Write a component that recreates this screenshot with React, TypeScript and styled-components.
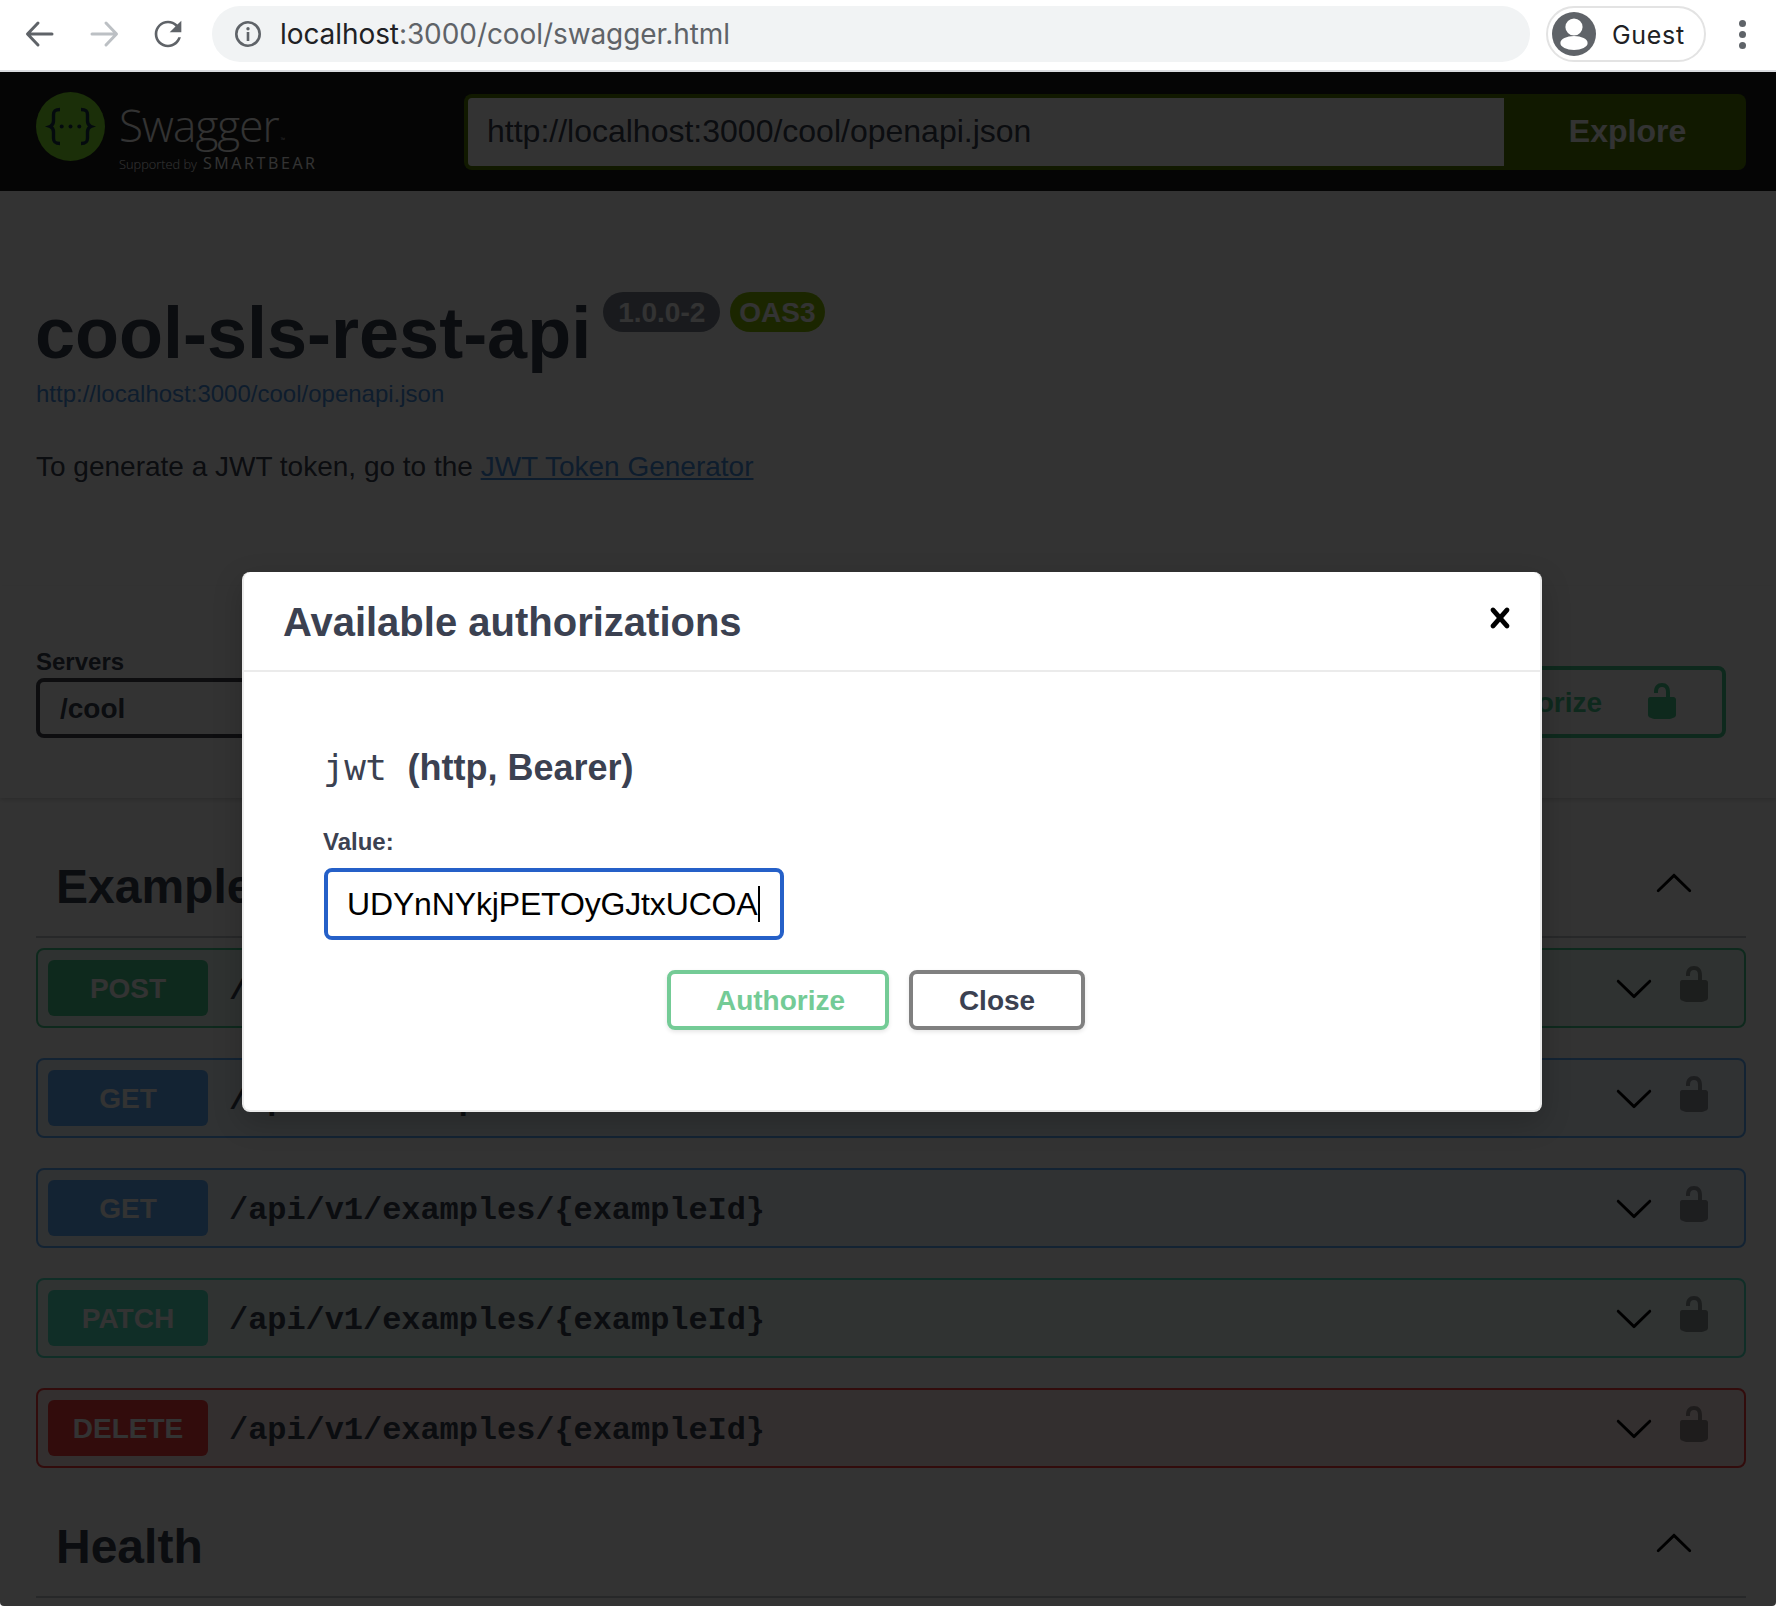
import React from 'react';
import styled, { createGlobalStyle } from 'styled-components';

const GlobalStyle = createGlobalStyle`
  html, body {
    margin: 0;
    padding: 0;
    background: #fff;
  }
  * {
    box-sizing: border-box;
  }
`;

const methodColors = {
  post: '#49cc90',
  get: '#61affe',
  patch: '#50e3c2',
  delete: '#f93e3e',
};

type Method = keyof typeof methodColors;

const sans = `'Liberation Sans', Arial, sans-serif`;
const mono = `'Liberation Mono', 'Courier New', monospace`;

const Window = styled.div`
  width: 1776px;
  height: 1606px;
  display: flex;
  flex-direction: column;
  overflow: hidden;
  border-radius: 0 0 4px 4px;
  font-family: ${sans};
  color: #3b4151;
`;

/* browser chrome */
const BrowserBar = styled.div`
  flex: none;
  height: 72px;
  display: flex;
  align-items: center;
  padding: 0 0 2px 20px;
  background: #fff;
  border-bottom: 2px solid #dadce0;
`;

const NavIcon = styled.svg`
  flex: none;
  width: 40px;
  height: 40px;
  margin-right: 24px;
`;

const Omnibox = styled.div`
  flex: none;
  width: 1318px;
  height: 56px;
  padding-left: 22px;
  display: flex;
  align-items: center;
  gap: 18px;
  border-radius: 28px;
  background: #f1f3f4;
`;

const UrlText = styled.div`
  font-family: Inter, sans-serif;
  font-size: 28px;
  color: #5f6368;
  white-space: nowrap;
  letter-spacing: -0.08px;

  strong {
    font-weight: 400;
    color: #202124;
  }
`;

const GuestChip = styled.div`
  flex: none;
  width: 160px;
  height: 56px;
  margin-left: 16px;
  padding-left: 4px;
  display: flex;
  align-items: center;
  gap: 16px;
  border: 2px solid #e3e3e3;
  border-radius: 28px;
  font-family: Inter, sans-serif;
  font-size: 25px;
  letter-spacing: 0.7px;
  color: #202124;
`;

const GuestName = styled.span`
  padding-top: 2px;
`;

const MenuDots = styled.div`
  flex: none;
  margin-left: 33px;
  display: flex;
  flex-direction: column;
  gap: 4px;

  span {
    width: 7px;
    height: 7px;
    border-radius: 50%;
    background: #5f6368;
  }
`;

/* swagger page */
const Viewport = styled.div`
  flex: 1;
  position: relative;
  overflow: hidden;
  background: #fff;
`;

const TopBar = styled.div`
  height: 119px;
  padding: 0 30px 0 36px;
  display: flex;
  align-items: center;
  background: #1b1b1b;
`;

const LogoBlock = styled.div`
  flex: none;
  width: 428px;
  height: 80px;
  display: flex;
  gap: 14px;
  color: #fff;
  font-family: 'Open Sans', sans-serif;
`;

const LogoText = styled.div`
  padding-top: 6px;
  display: flex;
  flex-direction: column;
  gap: 1px;
`;

const LogoName = styled.div`
  height: 54px;
  font-size: 44px;
  font-weight: 300;
  line-height: 54px;
  letter-spacing: -0.9px;

  sup {
    margin-left: 2px;
    font-size: 6px;
    line-height: 0;
    vertical-align: baseline;
    letter-spacing: 0;
  }
`;

const LogoTag = styled.div`
  display: flex;
  align-items: baseline;
  gap: 6px;
  font-size: 12.8px;
  font-weight: 300;
  line-height: 20px;

  b {
    font-size: 16px;
    font-weight: 400;
    letter-spacing: 2.6px;
  }
`;

const UrlForm = styled.div`
  flex: 1;
  height: 76px;
  display: flex;
`;

const UrlInput = styled.div`
  flex: 1;
  padding-left: 19px;
  display: flex;
  align-items: center;
  background: #fff;
  border: 4px solid #547f00;
  border-right: none;
  border-radius: 8px 0 0 8px;
  font-size: 32px;
  color: #3b4151;
`;

const ExploreButton = styled.div`
  flex: none;
  width: 242px;
  padding-left: 5px;
  display: flex;
  align-items: center;
  justify-content: center;
  background: #547f00;
  border-radius: 0 8px 8px 0;
  font-size: 32px;
  font-weight: 700;
  color: #fff;
`;

const Info = styled.div`
  padding: 102px 36px 101px;
`;

const TitleRow = styled.div`
  display: flex;
  align-items: flex-start;
  gap: 12px;
`;

const Title = styled.h2`
  margin: 0 0 0 -1px;
  font-size: 72px;
  line-height: 80px;
  font-weight: 700;
`;

const Badges = styled.div`
  display: flex;
  gap: 10px;
  margin-top: -1px;
`;

const Badge = styled.span<{ $color: string }>`
  height: 40px;
  padding: 2px 15px 0;
  display: flex;
  align-items: center;
  border-radius: 20px;
  background: ${(p) => p.$color};
  font-size: 28px;
  font-weight: 700;
  color: #fff;
`;

const OasBadge = styled(Badge)`
  padding: 2px 9px 0;
`;

const SpecLink = styled.div`
  margin-top: 5px;
  font-size: 24px;
  line-height: 32px;
  color: #4990e2;
`;

const Description = styled.p`
  margin: 39px 0 0;
  font-size: 28px;
  line-height: 36px;

  a {
    color: #4990e2;
    text-decoration: underline;
  }
`;

const SchemeContainer = styled.div`
  padding: 60px 50px 60px 36px;
  display: flex;
  align-items: flex-end;
  justify-content: space-between;
  background: #fff;
  box-shadow: 0 2px 4px 0 rgba(0, 0, 0, 0.15);
`;

const ServersLabel = styled.div`
  font-size: 24px;
  line-height: 32px;
  font-weight: 700;
`;

const ServerSelect = styled.div`
  width: 320px;
  height: 60px;
  padding: 2px 0 0 20px;
  display: flex;
  align-items: center;
  border: 4px solid #41444e;
  border-radius: 8px;
  font-size: 28px;
  font-weight: 700;
`;

const AuthorizeButton = styled.div`
  height: 72px;
  padding: 2px 40px 0 44px;
  display: flex;
  align-items: center;
  gap: 40px;
  border: 4px solid #49cc90;
  border-radius: 8px;
  font-size: 28px;
  font-weight: 700;
  color: #49cc90;

  svg {
    margin-top: -4px;
  }
`;

const LockIcon = styled.svg<{ $dim?: boolean }>`
  flex: none;
  width: 40px;
  height: 40px;
  fill: ${(p) => (p.$dim ? 'rgba(0, 0, 0, 0.4)' : 'currentColor')};
`;

const TagSection = styled.section`
  margin: 59px 30px 0 36px;
`;

const TagSectionNext = styled(TagSection)`
  margin-top: 49px;
`;

const TagHeader = styled.div`
  height: 81px;
  padding: 0 52px 0 20px;
  display: flex;
  justify-content: space-between;
  border-bottom: 2px solid rgba(59, 65, 81, 0.3);
`;

const TagName = styled.h3`
  margin: 0;
  font-size: 48px;
  line-height: 60px;
  font-weight: 700;
`;

const ArrowIcon = styled.svg<{ $up?: boolean }>`
  flex: none;
  width: 40px;
  height: 40px;
  fill: #000;
  transform: ${(p) => (p.$up ? 'rotate(180deg)' : 'none')};
`;

const TagArrow = styled(ArrowIcon)`
  margin-top: 7px;
`;

const OpList = styled.div`
  margin-top: 10px;
  display: flex;
  flex-direction: column;
  gap: 30px;
`;

const OpBlock = styled.div<{ $method: Method }>`
  height: 80px;
  padding: 0 30px 0 10px;
  display: flex;
  align-items: center;
  gap: 20px;
  border: 2px solid ${(p) => methodColors[p.$method]};
  border-radius: 8px;
  background: ${(p) => methodColors[p.$method]}1a;
`;

const MethodPill = styled.div<{ $method: Method }>`
  flex: none;
  width: 160px;
  height: 56px;
  padding-top: 2px;
  display: flex;
  align-items: center;
  justify-content: center;
  border-radius: 6px;
  background: ${(p) => methodColors[p.$method]};
  font-size: 28px;
  font-weight: 700;
  color: #fff;
`;

const OpPath = styled.div`
  flex: 1;
  margin-left: 1px;
  padding-top: 4px;
  font-family: ${mono};
  font-size: 32px;
  font-weight: 700;
  letter-spacing: -0.06px;
  white-space: nowrap;
`;

const OpLock = styled(LockIcon)`
  margin-bottom: 8px;
`;

/* modal */
const Backdrop = styled.div`
  position: absolute;
  inset: 0;
  padding: 500px 0 0 242px;
  background: rgba(0, 0, 0, 0.8);
`;

const Modal = styled.div`
  width: 1300px;
  height: 540px;
  background: #fff;
  border: 2px solid #ebebeb;
  border-top: none;
  border-radius: 8px;
  box-shadow: 0 10px 30px rgba(0, 0, 0, 0.2);
`;

const ModalHeader = styled.div`
  height: 100px;
  padding: 0 20px 0 39px;
  display: flex;
  align-items: flex-start;
  justify-content: space-between;
  border-bottom: 2px solid #ebebeb;
`;

const ModalTitle = styled.h4`
  margin: 26px 0 0;
  font-size: 40px;
  line-height: 48px;
  font-weight: 700;
`;

const CloseIcon = styled.svg`
  flex: none;
  width: 40px;
  height: 40px;
  margin-top: 26px;
  fill: #000;
`;

const ModalBody = styled.div`
  padding: 72px 0 0 79px;
`;

const SchemeTitle = styled.h4`
  margin: 0;
  display: flex;
  align-items: baseline;
  gap: 21px;
  font-size: 36px;
  line-height: 48px;
  font-weight: 700;
`;

const SchemeName = styled.code`
  font-family: 'DejaVu Sans Mono', monospace;
  font-size: 36px;
  font-weight: 400;
  letter-spacing: -0.5px;
`;

const FieldLabel = styled.div`
  margin-top: 34px;
  font-size: 24px;
  line-height: 32px;
  font-weight: 700;
`;

const TokenField = styled.div`
  width: 460px;
  height: 72px;
  margin: 10px 0 0 1px;
  padding-left: 19px;
  display: flex;
  align-items: center;
  border: 4px solid #2560c8;
  border-radius: 8px;
  font-size: 32px;
  letter-spacing: -0.15px;
  color: #000;
  white-space: nowrap;
`;

const Caret = styled.span`
  flex: none;
  width: 2px;
  height: 36px;
  background: #000;
`;

const ModalActions = styled.div`
  margin-top: 30px;
  padding-right: 111px;
  display: flex;
  justify-content: center;
  gap: 20px;
`;

const ModalButton = styled.div<{ $accent: string; $text: string; $width: number }>`
  width: ${(p) => p.$width}px;
  height: 60px;
  padding-top: 2px;
  display: flex;
  align-items: center;
  justify-content: center;
  border: 4px solid ${(p) => p.$accent};
  border-radius: 8px;
  box-shadow: 0 2px 4px rgba(0, 0, 0, 0.1);
  font-size: 28px;
  font-weight: 700;
  color: ${(p) => p.$text};
`;

const ModalAuthorize = styled(ModalButton)`
  padding-left: 5px;
`;

const Unlocked = ({ dim }: { dim?: boolean }) => {
  const Comp = dim ? OpLock : LockIcon;
  return (
    <Comp viewBox="0 0 20 20" $dim={dim}>
      <path d="M15.8 8H14V5.6C14 2.703 12.665 1 10 1 7.334 1 6 2.703 6 5.6V6h2v-.801C8 3.754 8.797 3 10 3c1.203 0 2 .754 2 2.199V8H4c-.553 0-1 .646-1 1.199V17c0 .549.428 1.139.951 1.307l1.197.387C5.672 18.861 6.55 19 7.1 19h5.8c.549 0 1.428-.139 1.951-.307l1.196-.387c.524-.167.953-.757.953-1.306V9.199C17 8.646 16.352 8 15.8 8z" />
    </Comp>
  );
};

const arrowPath =
  'M17.418 6.109c.272-.268.709-.268.979 0s.271.701 0 .969l-7.908 7.83c-.27.268-.707.268-.979 0l-7.908-7.83c-.27-.268-.27-.701 0-.969.271-.268.709-.268.979 0L10 13.25l7.418-7.141z';

const operations: { method: Method; label: string; path: string }[] = [
  { method: 'post', label: 'POST', path: '/api/v1/examples' },
  { method: 'get', label: 'GET', path: '/api/v1/examples' },
  { method: 'get', label: 'GET', path: '/api/v1/examples/{exampleId}' },
  { method: 'patch', label: 'PATCH', path: '/api/v1/examples/{exampleId}' },
  { method: 'delete', label: 'DELETE', path: '/api/v1/examples/{exampleId}' },
];

export default function App() {
  return (
    <Window>
      <GlobalStyle />
      <BrowserBar>
        <NavIcon viewBox="0 0 40 40" fill="none" stroke="#5f6368" strokeWidth="3" strokeLinecap="round" strokeLinejoin="round">
          <path d="M32 20H8M18 9 7.500 20 18 31" />
        </NavIcon>
        <NavIcon viewBox="0 0 40 40" fill="none" stroke="#bcc0c4" strokeWidth="3" strokeLinecap="round" strokeLinejoin="round">
          <path d="M8 20h24M22 9l10.500 11L22 31" />
        </NavIcon>
        <NavIcon viewBox="0 0 24 24" fill="#5f6368">
          <path d="M17.65 6.35C16.2 4.9 14.21 4 12 4c-4.42 0-7.99 3.58-7.99 8s3.57 8 7.99 8c3.73 0 6.84-2.55 7.73-6h-1.6c-.82 2.33-3.04 4.4-6.13 4.4-3.54 0-6.4-2.86-6.4-6.4s2.86-6.4 6.4-6.4c1.77 0 3.3.7 4.5 1.9L13 11h7V4l-2.35 2.35z" />
        </NavIcon>
        <Omnibox>
          <svg width="28" height="28" viewBox="0 0 28 28" fill="none">
            <circle cx="14" cy="14" r="11.700" stroke="#5f6368" strokeWidth="2.600" />
            <circle cx="14" cy="8.800" r="1.700" fill="#5f6368" />
            <rect x="12.700" y="12" width="2.600" height="9" fill="#5f6368" />
          </svg>
          <UrlText>
            <strong>localhost</strong>:3000/cool/swagger.html
          </UrlText>
        </Omnibox>
        <GuestChip>
          <svg width="44" height="44" viewBox="0 0 44 44">
            <circle cx="22" cy="22" r="22" fill="#5f6368" />
            <circle cx="22" cy="15" r="8.600" fill="#fff" />
            <ellipse cx="22" cy="31" rx="13.600" ry="7" fill="#fff" />
          </svg>
          <GuestName>Guest</GuestName>
        </GuestChip>
        <MenuDots>
          <span />
          <span />
          <span />
        </MenuDots>
      </BrowserBar>

      <Viewport>
        <TopBar>
          <LogoBlock>
            <svg width="69" height="69" viewBox="0 0 69 69" fill="none">
              <circle cx="34.500" cy="34.500" r="34.500" fill="#85ea2d" />
              <path
                d="M24 17.500c-5 0-6.500 1.500-6.500 5.500v6c0 3-1 4.600-3.500 5.500 2.500.9 3.500 2.500 3.500 5.500v6c0 4 1.500 5.500 6.500 5.500M45 17.500c5 0 6.500 1.500 6.500 5.500v6c0 3 1 4.600 3.500 5.500-2.500.9-3.500 2.500-3.500 5.500v6c0 4-1.500 5.500-6.500 5.500"
                stroke="#173647"
                strokeWidth="3.400"
              />
              <circle cx="25.700" cy="34.500" r="2" fill="#173647" />
              <circle cx="34.500" cy="34.500" r="2" fill="#173647" />
              <circle cx="43.300" cy="34.500" r="2" fill="#173647" />
            </svg>
            <LogoText>
              <LogoName>
                Swagger<sup>™</sup>
              </LogoName>
              <LogoTag>
                Supported by <b>SMARTBEAR</b>
              </LogoTag>
            </LogoText>
          </LogoBlock>
          <UrlForm>
            <UrlInput>http://localhost:3000/cool/openapi.json</UrlInput>
            <ExploreButton>Explore</ExploreButton>
          </UrlForm>
        </TopBar>

        <Info>
          <TitleRow>
            <Title>cool-sls-rest-api</Title>
            <Badges>
              <Badge $color="#7d8492">1.0.0-2</Badge>
              <OasBadge $color="#89bf04">OAS3</OasBadge>
            </Badges>
          </TitleRow>
          <SpecLink>http://localhost:3000/cool/openapi.json</SpecLink>
          <Description>
            To generate a JWT token, go to the <a>JWT Token Generator</a>
          </Description>
        </Info>

        <SchemeContainer>
          <div>
            <ServersLabel>Servers</ServersLabel>
            <ServerSelect>/cool</ServerSelect>
          </div>
          <AuthorizeButton>
            Authorize
            <Unlocked />
          </AuthorizeButton>
        </SchemeContainer>

        <TagSection>
          <TagHeader>
            <TagName>Examples</TagName>
            <TagArrow viewBox="0 0 20 20" $up>
              <path d={arrowPath} />
            </TagArrow>
          </TagHeader>
          <OpList>
            {operations.map((op, i) => (
              <OpBlock key={i} $method={op.method}>
                <MethodPill $method={op.method}>{op.label}</MethodPill>
                <OpPath>{op.path}</OpPath>
                <ArrowIcon viewBox="0 0 20 20">
                  <path d={arrowPath} />
                </ArrowIcon>
                <Unlocked dim />
              </OpBlock>
            ))}
          </OpList>
        </TagSection>

        <TagSectionNext>
          <TagHeader>
            <TagName>Health</TagName>
            <TagArrow viewBox="0 0 20 20" $up>
              <path d={arrowPath} />
            </TagArrow>
          </TagHeader>
        </TagSectionNext>

        <Backdrop>
          <Modal>
            <ModalHeader>
              <ModalTitle>Available authorizations</ModalTitle>
              <CloseIcon viewBox="0 0 20 20">
                <path d="M14.348 14.849c-.469.469-1.229.469-1.697 0L10 11.819l-2.651 3.029c-.469.469-1.229.469-1.697 0-.469-.469-.469-1.229 0-1.697l2.758-3.15-2.759-3.152c-.469-.469-.469-1.228 0-1.697s1.228-.469 1.697 0L10 8.183l2.651-3.031c.469-.469 1.228-.469 1.697 0s.469 1.229 0 1.697l-2.758 3.152 2.758 3.15c.469.469.469 1.229 0 1.698z" />
              </CloseIcon>
            </ModalHeader>
            <ModalBody>
              <SchemeTitle>
                <SchemeName>jwt</SchemeName>
                (http, Bearer)
              </SchemeTitle>
              <FieldLabel>Value:</FieldLabel>
              <TokenField>
                UDYnNYkjPETOyGJtxUCOA
                <Caret />
              </TokenField>
              <ModalActions>
                <ModalAuthorize $accent="#74cb96" $text="#74cb96" $width={222}>
                  Authorize
                </ModalAuthorize>
                <ModalButton $accent="#808080" $text="#3b4151" $width={176}>
                  Close
                </ModalButton>
              </ModalActions>
            </ModalBody>
          </Modal>
        </Backdrop>
      </Viewport>
    </Window>
  );
}
